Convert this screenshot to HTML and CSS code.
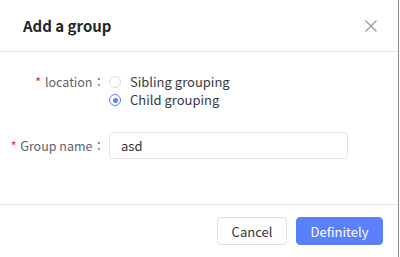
FILE: index.html
```html
<!DOCTYPE html>
<html lang="en">
<head>
    <meta charset="UTF-8">
    <title>Add a group</title>
    <link rel="stylesheet" href="styles.css">
</head>
<body>
    <div class="dialog">
        <!-- Header -->
        <div class="dialog-header">
            <span class="dialog-title">Add a group</span>
            <span class="close-btn">
                <svg width="14" height="14" viewBox="0 0 14 14">
                    <path d="M1.5 1.5 L12.5 12.5 M12.5 1.5 L1.5 12.5" stroke="#9a9a9a" stroke-width="1.3" fill="none"/>
                </svg>
            </span>
        </div>

        <!-- Form -->
        <div class="dialog-body">
            <div class="form-row">
                <label class="form-label"><span class="required">*</span> location：</label>
                <div class="radio-group">
                    <label class="radio"><span class="radio-circle"></span>Sibling grouping</label>
                    <label class="radio"><span class="radio-circle checked"></span>Child grouping</label>
                </div>
            </div>

            <div class="form-row row-name">
                <label class="form-label"><span class="required">*</span> Group name：</label>
                <input type="text" class="text-input" value="asd">
            </div>
        </div>

        <!-- Footer -->
        <div class="dialog-footer">
            <button class="btn btn-cancel">Cancel</button>
            <button class="btn btn-primary">Definitely</button>
        </div>
    </div>
</body>
</html>
```

FILE: styles.css
```css
body {
    margin: 0;
    background-color: #fff;
    font-family: "Noto Sans CJK JP", "Noto Sans", sans-serif;
    font-size: 13px;
    color: #333;
}

.dialog {
    width: 398px;
    height: 257px;
    border-right: 1px solid #8a8a8a;
    display: flex;
    flex-direction: column;
}

.dialog-header {
    height: 51px;
    border-bottom: 1px solid #e8e8e8;
    display: flex;
    align-items: center;
    justify-content: space-between;
    padding: 0 20px 0 23px;
}

.dialog-title {
    font-size: 15px;
    font-weight: bold;
    color: #262626;
}

.close-btn {
    display: flex;
}

.dialog-body {
    height: 152px;
    box-sizing: border-box;
    padding-top: 21px;
}

.form-row {
    display: flex;
    align-items: flex-start;
}

.row-name {
    margin-top: 23px;
    align-items: center;
}

.form-label {
    width: 105px;
    text-align: right;
    color: #606266;
    font-size: 12.5px;
    line-height: 18px;
    flex-shrink: 0;
    margin-right: 4px;
}

.required {
    color: #f5222d;
    margin-right: 1px;
}

.radio-group {
    display: flex;
    flex-direction: column;
}

.radio {
    display: flex;
    align-items: center;
    height: 18px;
    line-height: 18px;
    color: #3a3a3a;
}

.radio-circle {
    width: 12px;
    height: 12px;
    border: 1px solid #dcdcdc;
    border-radius: 50%;
    box-sizing: border-box;
    margin-right: 9px;
    position: relative;
}

.radio-circle.checked {
    border-color: #5b80f7;
}

.radio-circle.checked::after {
    content: "";
    position: absolute;
    left: 2.5px;
    top: 2.5px;
    width: 5px;
    height: 5px;
    border-radius: 50%;
    background-color: #5b80f7;
}

.text-input {
    width: 239px;
    height: 27px;
    box-sizing: border-box;
    border: 1px solid #e2e2e2;
    border-radius: 4px;
    padding: 0 11px;
    font-family: inherit;
    font-size: 13px;
    color: #333;
    outline: none;
}

.dialog-footer {
    border-top: 1px solid #e8e8e8;
    display: flex;
    justify-content: flex-end;
    align-items: center;
    gap: 9px;
    padding: 12px 15px 0 0;
}

.btn {
    height: 28px;
    border-radius: 4px;
    font-family: inherit;
    font-size: 13px;
    padding: 0 10px;
    cursor: pointer;
}

.btn-cancel {
    background-color: #fff;
    border: 1px solid #dcdfe6;
    color: #333;
    width: 70px;
}

.btn-primary {
    background-color: #5b80fb;
    border: 1px solid #5b80fb;
    color: #fff;
    width: 87px;
}
```
